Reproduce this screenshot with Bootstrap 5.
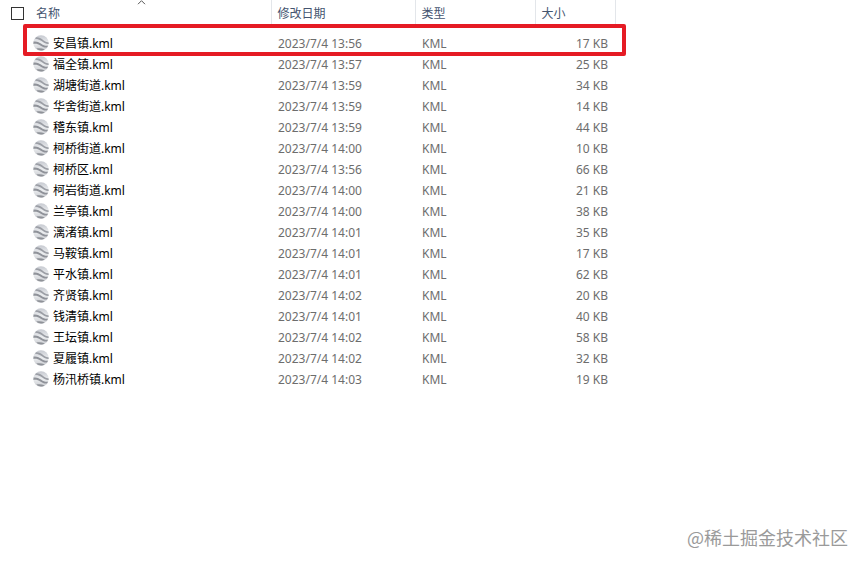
<!DOCTYPE html>
<html lang="zh-CN">
<head>
<meta charset="utf-8">
<meta name="viewport" content="width=device-width, initial-scale=1">
<title>KML 文件列表</title>
<link href="https://cdn.jsdelivr.net/npm/bootstrap@5.3.0/dist/css/bootstrap.min.css" rel="stylesheet">
<style>
  body { font-family: "Noto Sans", "Noto Sans CJK SC", sans-serif; font-size: 12px; line-height: 21px; color: #6d6d6d; background: #fff; }
  .files { table-layout: fixed; }
  .files th, .files td { padding: 0 7px; white-space: nowrap; }
  .files th { height: 26px; padding-left: 6px; font-weight: 400; color: #44546f; border-right: 1px solid #e3e6ea; }
  .files th:last-child { border-right: 0; }
  .files td { height: 21px; }
  .files .pick { border-right: 0; padding: 0 0 0 11px; }
  .files .name-head { padding-left: 8px; }
  .files .name-cell { padding-left: 33px; color: #000; }
  .files button { font-size: 12px; line-height: 20px; color: inherit; }
  .c-pick { width: 28px; } .c-name { width: 243px; } .c-date { width: 144px; } .c-type { width: 120px; } .c-size { width: 80px; }
  .gap-row td { height: 7px; line-height: 0; }
  .files .form-check-input { width: 13px; height: 13px; border: 1px solid #333; border-radius: 0; }
  .globe { margin-bottom: 2px; }
  .caret { top: 0; left: 109px; }
  .marker { left: 23px; top: 24px; width: 603px; height: 32px; border: 4px solid #e51b24; border-radius: 2px; pointer-events: none; }
  .credit { font-family: "Noto Sans CJK SC", sans-serif; font-size: 18px; line-height: 24px; padding: 0 17px 17px; color: #9a9a9a; }
</style>
</head>
<body>
<svg class="position-absolute" width="0" height="0" aria-hidden="true">
  <defs><linearGradient id="ball" x1="0" y1="0" x2="0" y2="1"><stop offset="0" stop-color="#c6c9d0"/><stop offset=".5" stop-color="#eceef0"/><stop offset="1" stop-color="#c9cbd0"/></linearGradient></defs>
</svg>
<main class="d-flex flex-column min-vh-100 position-relative">
  <table class="files w-100">
    <colgroup><col class="c-pick"><col class="c-name"><col class="c-date"><col class="c-type"><col class="c-size"><col></colgroup>
    <thead>
      <tr>
        <th class="pick"><input class="form-check-input d-block m-0" type="checkbox" id="all" aria-label="全选"></th>
        <th class="name-head position-relative" scope="col"><button class="btn p-0 border-0" type="button">名称</button>
          <svg class="caret position-absolute" width="9" height="5" viewBox="0 0 9 5" fill="none" stroke="#555" aria-hidden="true"><path d="M1 4.2 4.5.7 8 4.2"/></svg></th>
        <th scope="col"><button class="btn p-0 border-0" type="button">修改日期</button></th>
        <th scope="col"><button class="btn p-0 border-0" type="button">类型</button></th>
        <th scope="col"><button class="btn p-0 border-0" type="button">大小</button></th>
        <th></th>
      </tr>
    </thead>
    <tbody id="rows"><tr class="gap-row"><td colspan="6"></td></tr></tbody>
  </table>
  <div class="marker position-absolute"></div>
  <footer class="credit mt-auto text-end">@稀土掘金技术社区</footer>
</main>
<template id="row">
  <tr>
    <td class="name-cell" colspan="2"><div class="d-flex align-items-center gap-1">
      <svg class="globe" width="16" height="16" viewBox="0 0 16 16" aria-hidden="true">
        <circle cx="8" cy="8" r="7.7" fill="url(#ball)"/>
        <path d="M3.2 2.200C6 2 8 3.200 9.800 4.800S13.500 7.400 15.500 7.200L15.700 9C13.200 9.200 11.300 8.200 9.300 6.600S5.300 3.900 2 3.700Z" fill="#9b9ea5"/>
        <path d="M.5 6.500C4 6 6.200 7.100 8.300 8.700S12.200 11 15 10.700L14.100 12.500C11.500 12.800 9.400 12 7.300 10.500S3.300 8.600.4 8.900Z" fill="#8f9299"/>
        <path d="M3.400 13.600C6 12.900 8.500 13.300 11.700 14.300 9.700 16 6 16.200 3.400 13.600Z" fill="#8f9298"/>
      </svg><span></span></div></td>
    <td></td><td>KML</td><td class="text-end"></td><td></td>
  </tr>
</template>
<script src="https://cdn.jsdelivr.net/npm/bootstrap@5.3.0/dist/js/bootstrap.bundle.min.js"></script>
<script>
  const files = [
    ["安昌镇", "13:56", 17], ["福全镇", "13:57", 25], ["湖塘街道", "13:59", 34], ["华舍街道", "13:59", 14],
    ["稽东镇", "13:59", 44], ["柯桥街道", "14:00", 10], ["柯桥区", "13:56", 66], ["柯岩街道", "14:00", 21],
    ["兰亭镇", "14:00", 38], ["漓渚镇", "14:01", 35], ["马鞍镇", "14:01", 17], ["平水镇", "14:01", 62],
    ["齐贤镇", "14:02", 20], ["钱清镇", "14:01", 40], ["王坛镇", "14:02", 58], ["夏履镇", "14:02", 32],
    ["杨汛桥镇", "14:03", 19]
  ];
  const body = document.getElementById("rows"), template = document.getElementById("row");
  for (const [name, time, size] of files) {
    const row = template.content.cloneNode(true), cells = row.querySelectorAll("td");
    row.querySelector("span").textContent = name + ".kml";
    cells[1].textContent = "2023/7/4 " + time;
    cells[3].textContent = size + " KB";
    body.append(row);
  }
</script>
</body>
</html>
